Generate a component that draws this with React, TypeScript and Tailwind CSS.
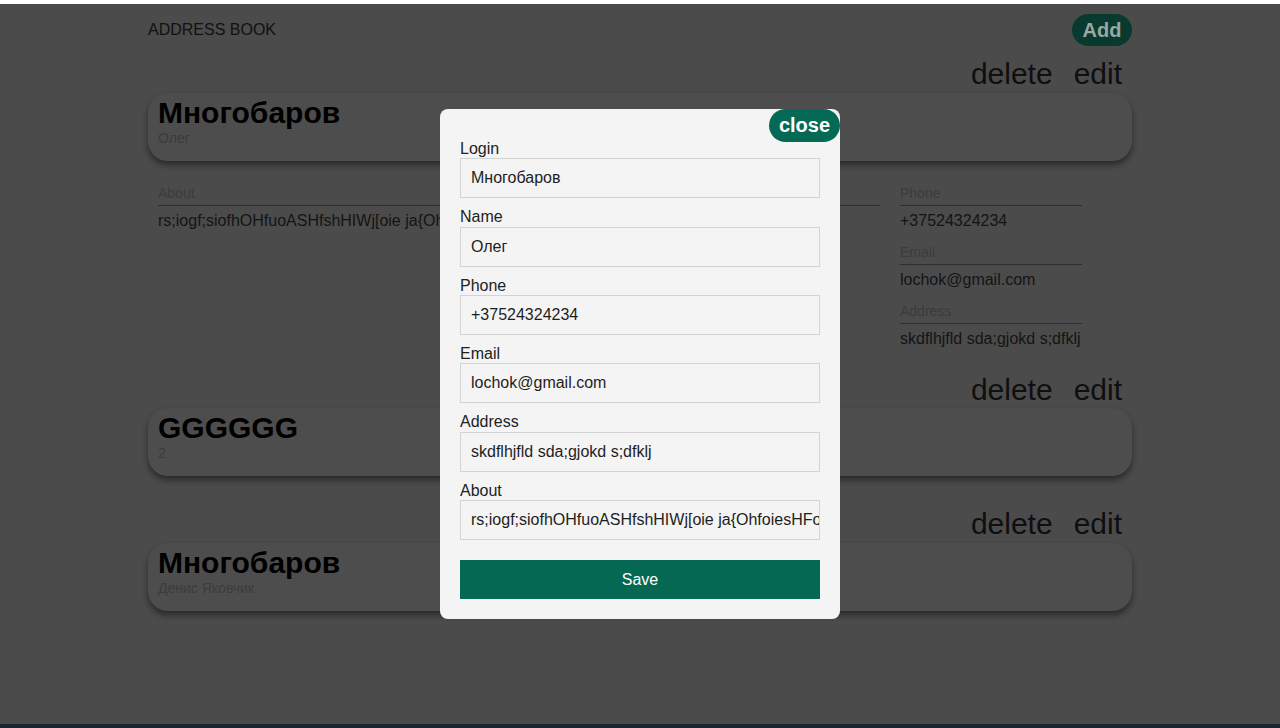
const contacts = [
  { login: 'Многобаров', name: 'Олег', open: true, gapTop: 'mt-[11px]', cardTop: 'mt-[2px]' },
  { login: 'GGGGGG', name: '2', open: false, gapTop: 'mt-[11px]', cardTop: 'mt-px' },
  { login: 'Многобаров', name: 'Денис Яковчик', open: false, gapTop: 'mt-[31px]', cardTop: 'mt-[2px]' },
];

const about = 'rs;iogf;siofhOHfuoASHfshHIWj[oie ja{OhfoiesHFoiehfoihoEHF[iEFOIEhfo;hoi';

const fields = [
  { label: 'Login', value: 'Многобаров' },
  { label: 'Name', value: 'Олег' },
  { label: 'Phone', value: '+37524324234' },
  { label: 'Email', value: 'lochok@gmail.com' },
  { label: 'Address', value: 'skdflhjfld sda;gjokd s;dfklj' },
  { label: 'About', value: about },
];

const Detail = ({ label, value }: { label: string; value: string }) => (
  <div className="mb-[14px]">
    <div className="border-b border-[#2e2e2e] pb-[4px] text-[14px] leading-[16px] text-[#3b3b3b]">{label}</div>
    <div className="mt-[6px] truncate text-[16px] leading-[18px] text-[#141414]">{value}</div>
  </div>
);

const ContactItem = ({ c }: { c: (typeof contacts)[number] }) => (
  <div className={c.gapTop}>
    <div className="flex h-[34px] justify-end gap-[21px] pr-[10px] text-[30px] leading-[34px] text-[#0f0f0f]">
      <span>delete</span>
      <span>edit</span>
    </div>
    <div className={`${c.cardTop} h-[68px] rounded-[20px] bg-[#4d4d4d] px-[10px] pt-[3px] shadow-[0_4px_6px_rgba(0,0,0,0.45)]`}>
      <div className="text-[30px] font-bold leading-[34px] text-black">{c.login}</div>
      <div className="text-[14px] leading-[16px] text-[#3c3c3c]">{c.name}</div>
    </div>
    {c.open && (
      <div className="mt-[24px] flex pl-[10px]">
        <div className="w-[722px] overflow-hidden">
          <Detail label="About" value={about} />
        </div>
        <div className="ml-[20px] w-[182px]">
          <Detail label="Phone" value="+37524324234" />
          <Detail label="Email" value="lochok@gmail.com" />
          <Detail label="Address" value="skdflhjfld sda;gjokd s;dfklj" />
        </div>
      </div>
    )}
  </div>
);

export default function App() {
  return (
    <div className="flex h-[728px] w-[1280px] flex-col overflow-hidden bg-[#4b4b4b] font-['Liberation_Sans',Arial,sans-serif]">
      <div className="h-[4px] bg-white" />
      <div className="relative flex-1">
        <div className="mx-auto w-[984px] pt-[10px]">
          <div className="flex h-[32px] items-center justify-between">
            <span className="text-[16px] text-[#111]">ADDRESS BOOK</span>
            <span className="flex h-[32px] w-[60px] items-center justify-center rounded-full bg-[#083a30] text-[20px] font-bold text-[#9aa7a3]">
              Add
            </span>
          </div>
          {contacts.map((c, i) => (
            <ContactItem key={i} c={c} />
          ))}
        </div>

        <div className="absolute inset-0 flex items-center justify-center">
          <div className="relative w-[400px] rounded-[8px] bg-[#f4f4f4] px-[20px] pb-[20px] pt-[31px]">
            <span className="absolute right-0 top-0 flex h-[33px] w-[71px] items-center justify-center rounded-full bg-[#046a55] text-[20px] font-bold text-white">
              close
            </span>
            {fields.map((f) => (
              <div key={f.label} className="mb-[10px]">
                <div className="text-[16px] leading-[18.4px] text-[#222]">{f.label}</div>
                <div className="flex h-[40px] items-center overflow-hidden whitespace-nowrap border border-[#d3d3d3] bg-[#f4f4f4] px-[10px] text-[16px] text-[#1e1e1e]">
                  {f.value}
                </div>
              </div>
            ))}
            <div className="mt-[20px] flex h-[39px] items-center justify-center bg-[#056852] text-[16px] text-white">
              Save
            </div>
          </div>
        </div>
      </div>
      <div className="h-[4px] bg-[#1c2430]" />
    </div>
  );
}
